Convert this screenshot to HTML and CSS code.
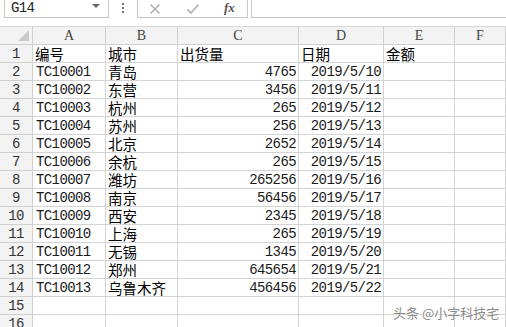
FILE: index.html
```html
<!DOCTYPE html>
<html lang="zh">
<head>
<meta charset="utf-8">
<link rel="stylesheet" href="styles.css">
</head>
<body>
<div class="app">
  <div class="toolbar">
    <div class="namebox"><span class="name">G14</span><span class="caret"></span></div>
    <div class="grip"><i></i><i></i><i></i></div>
    <div class="fxbtns">
      <svg class="ic-x" width="12" height="12" viewBox="0 0 12 12"><path d="M1.5 1.5 L10.5 10.5 M10.5 1.5 L1.5 10.5" stroke="#a8a8a8" stroke-width="1.4" fill="none"/></svg>
      <svg class="ic-ok" width="14" height="12" viewBox="0 0 14 12"><path d="M1.5 6.5 L5 10 L12.5 1.5" stroke="#b4b4b4" stroke-width="1.8" fill="none"/></svg>
      <span class="fx">fx</span>
    </div>
    <div class="formula"></div>
  </div>
  <div class="sheet">
    <div class="c corner"><span class="tri"></span></div>
    <div class="c ch">A</div><div class="c ch">B</div><div class="c ch">C</div><div class="c ch">D</div><div class="c ch">E</div><div class="c ch">F</div>

    <div class="c rh">1</div><div class="c zh">编号</div><div class="c zh">城市</div><div class="c zh">出货量</div><div class="c zh">日期</div><div class="c zh">金额</div><div class="c"></div>
    <div class="c rh">2</div><div class="c">TC10001</div><div class="c zh">青岛</div><div class="c num">4765</div><div class="c num">2019/5/10</div><div class="c"></div><div class="c"></div>
    <div class="c rh">3</div><div class="c">TC10002</div><div class="c zh">东营</div><div class="c num">3456</div><div class="c num">2019/5/11</div><div class="c"></div><div class="c"></div>
    <div class="c rh">4</div><div class="c">TC10003</div><div class="c zh">杭州</div><div class="c num">265</div><div class="c num">2019/5/12</div><div class="c"></div><div class="c"></div>
    <div class="c rh">5</div><div class="c">TC10004</div><div class="c zh">苏州</div><div class="c num">256</div><div class="c num">2019/5/13</div><div class="c"></div><div class="c"></div>
    <div class="c rh">6</div><div class="c">TC10005</div><div class="c zh">北京</div><div class="c num">2652</div><div class="c num">2019/5/14</div><div class="c"></div><div class="c"></div>
    <div class="c rh">7</div><div class="c">TC10006</div><div class="c zh">余杭</div><div class="c num">265</div><div class="c num">2019/5/15</div><div class="c"></div><div class="c"></div>
    <div class="c rh">8</div><div class="c">TC10007</div><div class="c zh">潍坊</div><div class="c num">265256</div><div class="c num">2019/5/16</div><div class="c"></div><div class="c"></div>
    <div class="c rh">9</div><div class="c">TC10008</div><div class="c zh">南京</div><div class="c num">56456</div><div class="c num">2019/5/17</div><div class="c"></div><div class="c"></div>
    <div class="c rh">10</div><div class="c">TC10009</div><div class="c zh">西安</div><div class="c num">2345</div><div class="c num">2019/5/18</div><div class="c"></div><div class="c"></div>
    <div class="c rh">11</div><div class="c">TC10010</div><div class="c zh">上海</div><div class="c num">265</div><div class="c num">2019/5/19</div><div class="c"></div><div class="c"></div>
    <div class="c rh">12</div><div class="c">TC10011</div><div class="c zh">无锡</div><div class="c num">1345</div><div class="c num">2019/5/20</div><div class="c"></div><div class="c"></div>
    <div class="c rh">13</div><div class="c">TC10012</div><div class="c zh">郑州</div><div class="c num">645654</div><div class="c num">2019/5/21</div><div class="c"></div><div class="c"></div>
    <div class="c rh">14</div><div class="c">TC10013</div><div class="c zh">乌鲁木齐</div><div class="c num">456456</div><div class="c num">2019/5/22</div><div class="c"></div><div class="c"></div>
    <div class="c rh">15</div><div class="c"></div><div class="c"></div><div class="c"></div><div class="c"></div><div class="c"></div><div class="c"></div>
    <div class="c rh">16</div><div class="c"></div><div class="c"></div><div class="c"></div><div class="c"></div><div class="c"></div><div class="c"></div>
  </div>
  <div class="watermark">头条 @小字科技宅</div>
</div>
</body>
</html>
```

FILE: styles.css
```css
html, body {
  margin: 0;
  padding: 0;
  background: #fff;
}
.app {
  position: relative;
  width: 506px;
  height: 327px;
  overflow: hidden;
  font-family: "Liberation Mono", "Noto Sans CJK SC", monospace;
}
.toolbar {
  height: 26px;
  display: flex;
  align-items: flex-start;
  background: #fff;
  box-sizing: border-box;
}
.namebox {
  margin-left: 4px;
  width: 105px;
  height: 18px;
  box-sizing: border-box;
  border: 1px solid #c6c6c6;
  border-top: none;
  background: #fff;
  display: flex;
  align-items: center;
  justify-content: space-between;
  padding: 0 8px 2px 6px;
}
.name {
  font-size: 14px;
  letter-spacing: -0.6px;
  color: #222;
}
.caret {
  width: 0;
  height: 0;
  border-left: 4px solid transparent;
  border-right: 4px solid transparent;
  border-top: 4px solid #666;
  margin-bottom: 3px;
}
.grip {
  width: 28px;
  height: 16px;
  display: flex;
  flex-direction: column;
  align-items: center;
  justify-content: center;
  gap: 2px;
}
.grip i {
  width: 2px;
  height: 2px;
  background: #777;
}
.fxbtns {
  width: 111px;
  height: 18px;
  box-sizing: border-box;
  border: 1px solid #c6c6c6;
  border-top: none;
  background: #fff;
  display: flex;
  align-items: center;
  padding-left: 11px;
}
.ic-x { margin-right: 25px; }
.ic-ok { margin-right: 24px; }
.fx {
  font-family: "Liberation Serif", serif;
  font-style: italic;
  font-weight: bold;
  font-size: 13px;
  color: #555;
  margin-bottom: 2px;
}
.formula {
  margin-left: 3px;
  flex: 1;
  height: 18px;
  box-sizing: border-box;
  border-left: 1px solid #c6c6c6;
  border-bottom: 1px solid #c6c6c6;
  background: #fff;
}
.sheet {
  display: grid;
  grid-template-columns: 33px 73px 72px 121px 85px 71px 1fr;
  grid-auto-rows: 18px;
  border-top: 1px solid #d8d8d8;
}
.c {
  box-sizing: border-box;
  border-right: 1px solid #d4d4d4;
  border-bottom: 1px solid #d4d4d4;
  font-size: 14px;
  line-height: 16px;
  letter-spacing: -0.6px;
  color: #1a1a1a;
  display: flex;
  align-items: center;
  padding: 0 2px 0 3px;
  white-space: nowrap;
  overflow: visible;
}
.zh {
  font-family: "Noto Sans CJK SC", sans-serif;
  font-size: 14.5px;
  letter-spacing: 0;
  padding-left: 2px;
  color: #000;
}
.num {
  justify-content: flex-end;
  padding-right: 2px;
}
.ch, .rh, .corner {
  background: #f3f3f3;
  border-color: #d0d0d0;
  color: #444;
  justify-content: center;
  padding: 0;
}
.ch {
  font-family: "Liberation Serif", serif;
  font-size: 14px;
  letter-spacing: 0;
}
.rh {
  font-size: 14px;
  color: #333;
}
.corner {
  position: relative;
}
.tri {
  position: absolute;
  right: 3px;
  bottom: 3px;
  width: 0;
  height: 0;
  border-left: 11px solid transparent;
  border-bottom: 11px solid #c9c9c9;
}
.watermark {
  position: absolute;
  left: 393px;
  top: 305px;
  font-family: "Noto Sans CJK SC", sans-serif;
  font-size: 13px;
  line-height: 16px;
  color: #8a8a8a;
  white-space: nowrap;
  text-shadow: 0 0 1px #fff, 0 0 2px #fff;
}
```
